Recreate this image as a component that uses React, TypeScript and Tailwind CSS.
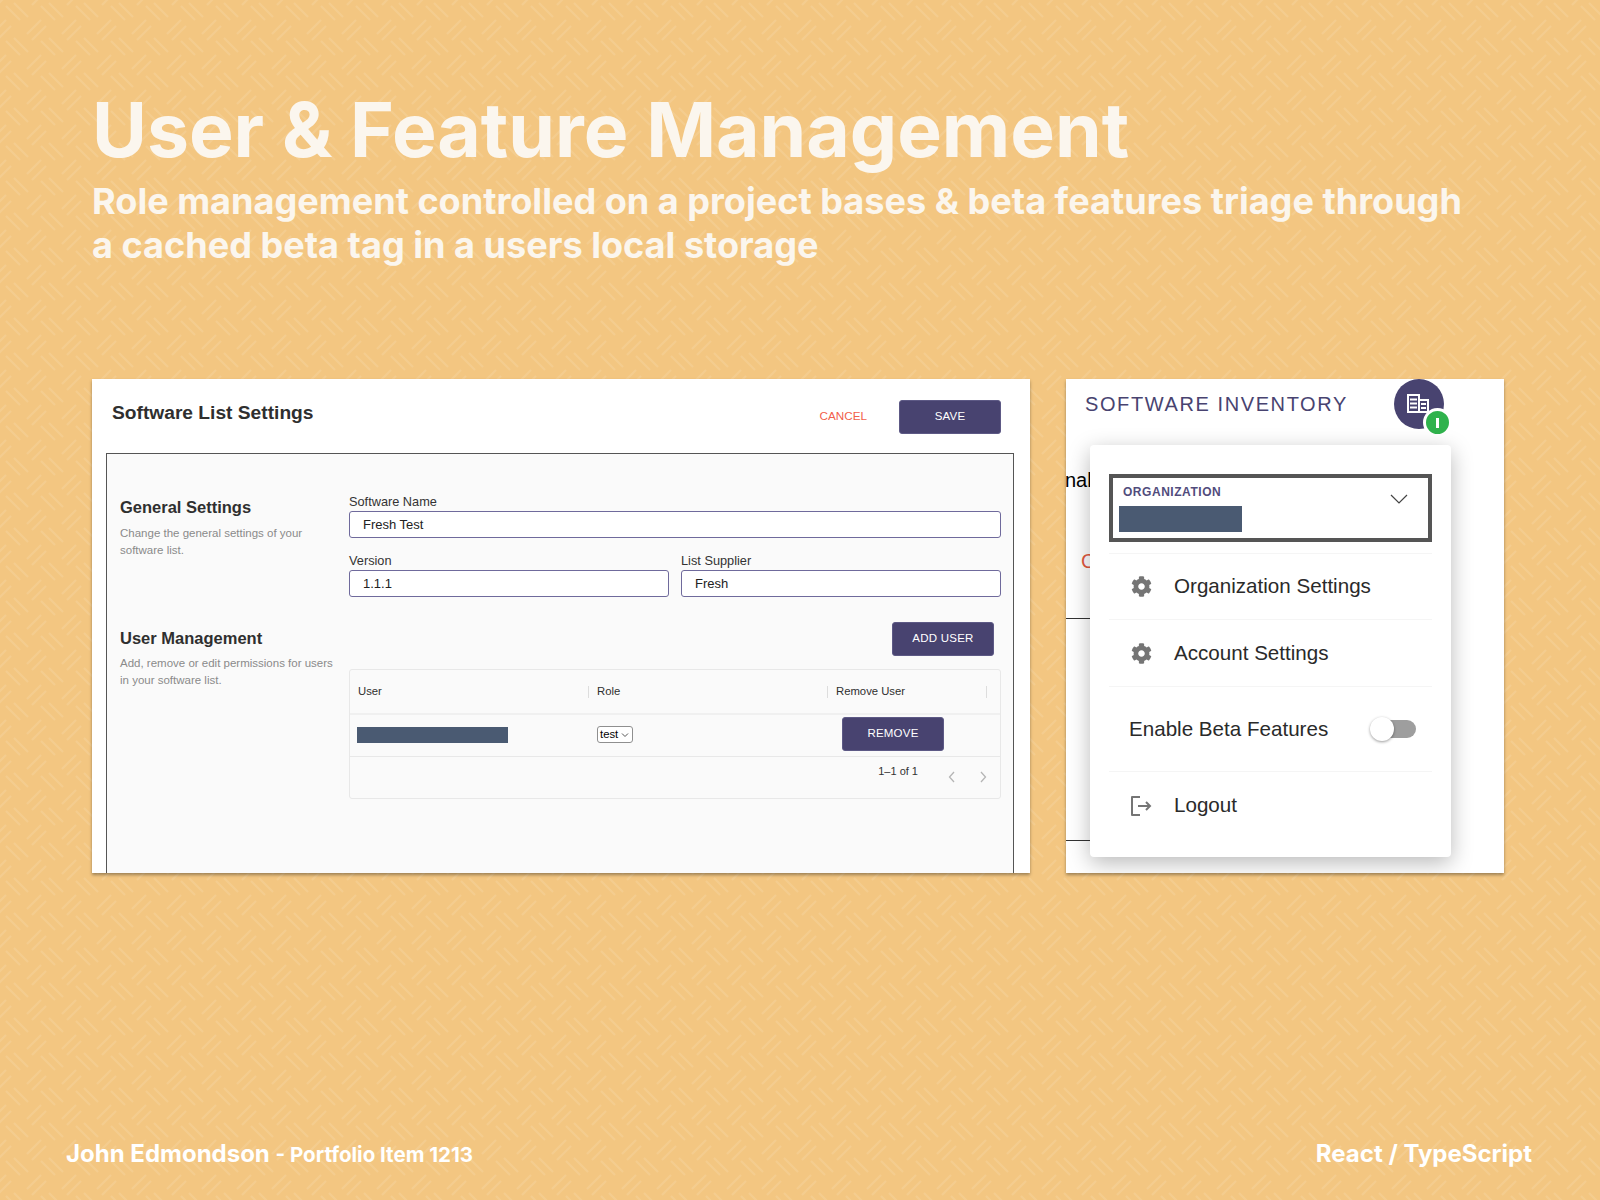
import { FaCog } from "react-icons/fa";

const BTN =
  "flex items-center justify-center rounded-[3px] bg-[#484370] border border-[#5d5985] text-white text-[11.5px] tracking-[0.02em]";

function Pattern() {
  return (
    <svg className="absolute inset-0 h-full w-full" aria-hidden="true">
      <defs>
        <pattern id="weave" width="35" height="35" patternUnits="userSpaceOnUse">
          <g stroke="#ffffff" strokeOpacity="0.11" strokeWidth="2">
            <path d="M6 6 L20 20 M14 3 L28 17" />
            <path d="M-8 34 L6 20 M-3 40 L11 26" />
            <path d="M27 34 L41 20 M32 40 L46 26" />
            <path d="M-8 -1 L6 -15 M-3 5 L11 -9" />
            <path d="M27 -1 L41 -15 M32 5 L46 -9" />
          </g>
        </pattern>
      </defs>
      <rect width="100%" height="100%" fill="url(#weave)" />
    </svg>
  );
}

function Field({ label, value, className }: { label: string; value: string; className?: string }) {
  return (
    <div className={className}>
      <div className="text-[12.75px] leading-[15px] text-[#333]">{label}</div>
      <div className="mt-[2px] flex h-[27px] items-center rounded-[3px] border border-[#6f6a9c] bg-white pl-[13px] text-[13px] text-[#222]">
        {value}
      </div>
    </div>
  );
}

function HeaderCell({ label, width }: { label: string; width: string }) {
  return (
    <div className={`flex items-center justify-between pl-2 ${width}`}>
      <span>{label}</span>
      <span className="h-[12px] w-px bg-[#ddd]" />
    </div>
  );
}

function SoftwareSettings() {
  return (
    <div className="flex h-[494px] w-[938px] flex-col bg-white pl-[14px] pr-[16px] shadow-[0_2px_3px_rgba(0,0,0,0.35)]">
      <div className="flex h-[74px] shrink-0 pl-[6px] pr-[13px]">
        <h2 className="mt-[22px] text-[19.2px] font-bold leading-[24px] text-[#2f2f2f]">Software List Settings</h2>
        <span className="ml-auto mt-[29px] mr-[32px] text-[11.7px] leading-[16px] text-[#f2604a]">CANCEL</span>
        <button className={`${BTN} mt-[21px] h-[34px] w-[102px]`}>SAVE</button>
      </div>
      <div className="flex-1 border-x border-t border-[#555] bg-[#fafafa] pl-[13px] pr-[12px]">
        <div className="flex pt-[40px]">
          <div className="w-[229px] shrink-0 pt-[3px]">
            <h3 className="text-[16.5px] font-bold leading-[20px] text-[#2f2f2f]">General Settings</h3>
            <p className="mt-[8px] w-[200px] text-[11.5px] leading-[17px] text-[#8a8a8a]">
              Change the general settings of your software list.
            </p>
          </div>
          <div className="flex-1">
            <Field label="Software Name" value="Fresh Test" />
            <div className="mt-[15px] flex gap-[12px]">
              <Field label="Version" value="1.1.1" className="w-[320px]" />
              <Field label="List Supplier" value="Fresh" className="flex-1" />
            </div>
          </div>
        </div>
        <div className="mt-[25px] flex">
          <div className="w-[229px] shrink-0 pt-[6px]">
            <h3 className="text-[16.5px] font-bold leading-[20px] text-[#2f2f2f]">User Management</h3>
            <p className="mt-[7px] w-[215px] text-[11.5px] leading-[17px] text-[#8a8a8a]">
              Add, remove or edit permissions for users in your software list.
            </p>
          </div>
          <div className="flex-1">
            <div className="flex justify-end pr-[7px]">
              <button className={`${BTN} h-[34px] w-[102px]`}>ADD USER</button>
            </div>
            <div className="mt-[13px] h-[130px] rounded-[3px] border border-[#e8e8e8] text-[11.3px] text-[#2f2f2f]">
              <div className="flex h-[45px] items-center border-b-2 border-[#f0f0f0]">
                <HeaderCell label="User" width="w-[239px]" />
                <HeaderCell label="Role" width="w-[239px]" />
                <HeaderCell label="Remove User" width="w-[159px]" />
              </div>
              <div className="flex h-[42px] items-center border-b border-[#e8e8e8] pb-[2px]">
                <div className="w-[239px] pl-[7px]">
                  <div className="h-[16px] w-[151px] bg-[#4a5a72]" />
                </div>
                <div className="w-[253px] pl-2">
                  <div className="flex h-[17px] w-[36px] items-center justify-between rounded-[3px] border border-[#8f8f8f] bg-white pl-[2px] pr-[3px] text-black">
                    test
                    <svg width="8" height="6" viewBox="0 0 8 6" fill="none" stroke="#555" strokeWidth="1">
                      <path d="M1 1.5 L4 4.5 L7 1.5" />
                    </svg>
                  </div>
                </div>
                <button className={`${BTN} -mt-[2px] h-[34px] w-[102px]`}>REMOVE</button>
              </div>
              <div className="flex justify-end pr-[13px] text-[11px] text-[#333]">
                <span className="mr-[30px] mt-[6px] leading-[17px]">1–1 of 1</span>
                <svg className="mt-[14px]" width="39" height="12" viewBox="0 0 39 12" fill="none" stroke="#b5b5b5" strokeWidth="1.3">
                  <path d="M6 1 L1.5 6 L6 11" />
                  <path d="M33 1 L37.5 6 L33 11" />
                </svg>
              </div>
            </div>
          </div>
        </div>
      </div>
    </div>
  );
}

function BuildingIcon() {
  return (
    <svg className="-mt-[2px] -ml-[2px]" width="22" height="19" viewBox="0 0 22 19" fill="#484370" stroke="#ffffff" strokeWidth="2">
      <path d="M1 18 V1 H12 V6 H21 V18 Z M12 6 V18" />
      <path d="M3 5.5 H10 M3 9.5 H10 M3 13.5 H10 M14 10 H19 M14 14 H19" strokeWidth="2" />
    </svg>
  );
}

function MenuRow({ icon, label, height }: { icon: React.ReactNode; label: string; height: string }) {
  return (
    <div className={`flex items-center border-t border-[#f5f5f5] pl-[21px] ${height}`}>
      <span className="flex w-[22px] justify-center">{icon}</span>
      <span className="ml-[22px] text-[20.6px] text-[#2a2a2a]">{label}</span>
    </div>
  );
}

function AccountMenu() {
  return (
    <div className="absolute left-[24px] top-[66px] h-[412px] w-[361px] rounded-[4px] bg-white px-[19px] pt-[29px] shadow-[0_6px_22px_rgba(0,0,0,0.28)]">
      <div className="relative h-[68px] border-4 border-[#555] pl-[10px] pt-[6px]">
        <div className="text-[12px] font-bold leading-[16px] tracking-[0.045em] text-[#514c7c]">ORGANIZATION</div>
        <div className="mt-[6px] -ml-[4px] h-[26px] w-[123px] bg-[#4a5a72]" />
        <svg className="absolute right-[20px] top-[16px]" width="18" height="10" viewBox="0 0 18 10" fill="none" stroke="#444" strokeWidth="1.2">
          <path d="M1 1 L9 9 L17 1" />
        </svg>
      </div>
      <div className="mt-[11px]">
        <MenuRow icon={<FaCog className="h-[21px] w-[21px] text-[#757575]" />} label="Organization Settings" height="h-[66px]" />
        <MenuRow icon={<FaCog className="h-[21px] w-[21px] text-[#757575]" />} label="Account Settings" height="h-[67px]" />
        <div className="flex h-[85px] items-center border-t border-[#f5f5f5] pl-[20px]">
          <span className="w-[241px] text-[20.6px] text-[#2a2a2a]">Enable Beta Features</span>
          <div className="relative h-[18px] w-[46px]">
            <div className="absolute right-[0px] top-0 h-[18px] w-[36px] rounded-full bg-[#9e9e9e]" />
            <div className="absolute left-0 top-[-3px] h-[24px] w-[24px] rounded-full bg-white shadow-[0_1px_3px_rgba(0,0,0,0.4)]" />
          </div>
        </div>
        <div className="flex h-[68px] items-center border-t border-[#f5f5f5] pl-[21px]">
          <span className="flex w-[22px] justify-center">
            <svg width="22" height="20" viewBox="0 0 22 20" fill="none" stroke="#757575" strokeWidth="2">
              <path d="M10 1 H2 V19 H10" strokeLinejoin="round" />
              <path d="M8 10 H20 M16 6 L20 10 L16 14" />
            </svg>
          </span>
          <span className="ml-[22px] text-[20.6px] text-[#2a2a2a]">Logout</span>
        </div>
      </div>
    </div>
  );
}

function InventoryPanel() {
  return (
    <div className="relative h-[494px] w-[438px] overflow-hidden bg-white shadow-[0_2px_3px_rgba(0,0,0,0.35)]">
      <div className="flex h-[50px] items-center pl-[19px]">
        <span className="text-[20px] leading-none tracking-[0.08em] text-[#484370]">SOFTWARE INVENTORY</span>
        <div className="relative ml-[46px] flex h-[50px] w-[50px] items-center justify-center rounded-full bg-[#484370]">
          <BuildingIcon />
          <div className="absolute bottom-[-8px] right-[-8px] flex h-[29px] w-[29px] items-center justify-center rounded-full border-[3px] border-white bg-[#2fb24c]">
            <span className="h-[10px] w-[3px] bg-white" />
          </div>
        </div>
      </div>
      {/* page behind the menu */}
      <span className="absolute left-[-1px] top-[88px] text-[20px] leading-[26px] text-black">nal</span>
      <span className="absolute left-[15px] top-[170px] text-[20px] leading-[24px] text-[#e2583e]">C</span>
      <div className="absolute left-0 top-[239px] h-px w-[30px] bg-[#333]" />
      <div className="absolute left-0 top-[461px] h-px w-[30px] bg-[#333]" />
      <AccountMenu />
    </div>
  );
}

export default function App() {
  return (
    <div className="relative flex h-[1200px] w-[1600px] flex-col overflow-hidden bg-[#f3c681] font-['Liberation_Sans',Arial,sans-serif]">
      <Pattern />
      <div className="relative pl-[92px] pt-[88px] font-['Inter',sans-serif] text-[#fbf6ee]">
        <h1 className="text-[75px] font-bold leading-[84px]">User &amp; Feature Management</h1>
        <p className="mt-[7px] w-[1385px] text-[36.1px] font-bold leading-[44px]">
          Role management controlled on a project bases &amp; beta features triage through a cached beta tag in a users local storage
        </p>
      </div>
      <div className="relative mt-[112px] flex gap-[36px] pl-[92px]">
        <SoftwareSettings />
        <InventoryPanel />
      </div>
      <div className="relative mt-auto flex items-baseline justify-between pb-[28px] pl-[66px] pr-[68px] font-['Inter',sans-serif] font-bold text-white">
        <div className="text-[24px]">
          John Edmondson <span className="text-[20.5px]">- Portfolio Item 1213</span>
        </div>
        <div className="text-[24px]">React / TypeScript</div>
      </div>
    </div>
  );
}
